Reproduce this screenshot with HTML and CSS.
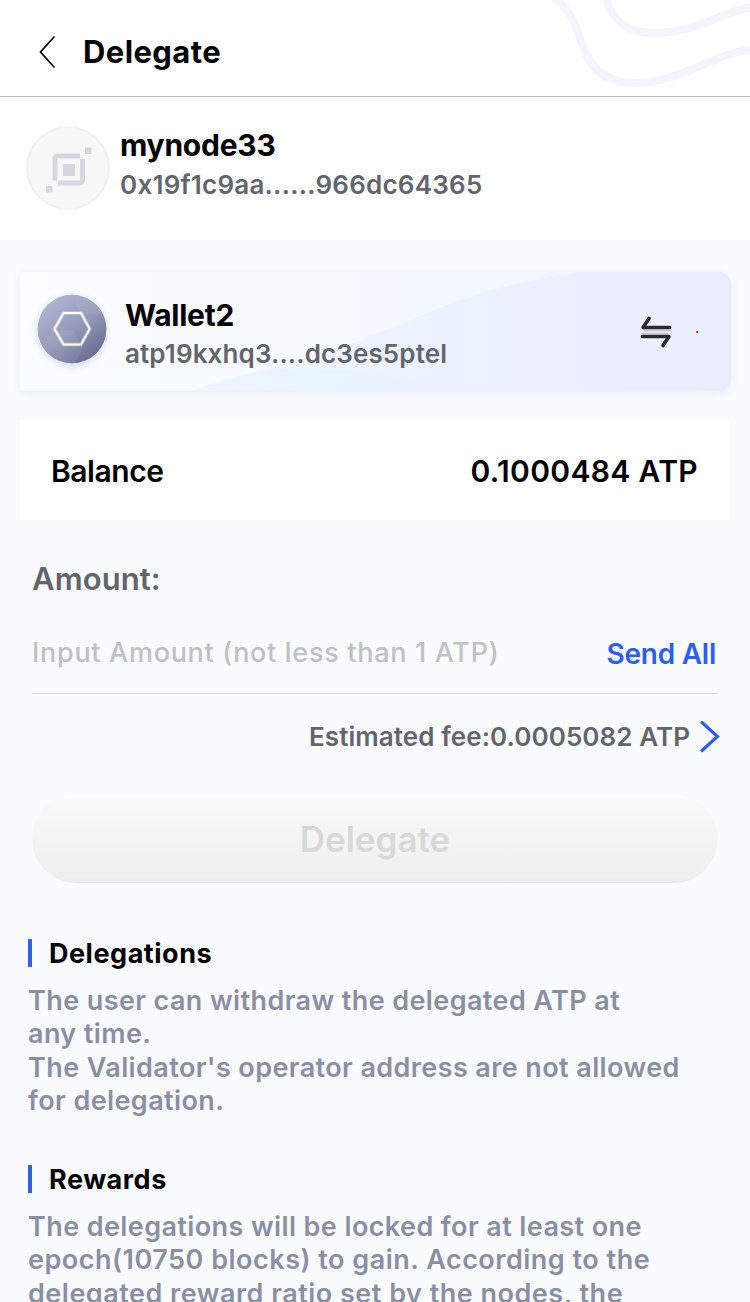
FILE: index.html
```html
<!DOCTYPE html>
<html lang="en">
<head>
<meta charset="utf-8">
<title>Delegate</title>
<link rel="stylesheet" href="styles.css">
</head>
<body>
<div class="screen">
  <header class="header">
    <svg class="header-waves" width="250" height="96" viewBox="0 0 250 96" fill="none" stroke="#f3f4fc" stroke-width="8">
      <path d="M54 -2C70 10 76 24 81 41C88 66 104 83 134 83C181 83 218 51 252 50"/>
      <path d="M106 -2C112 22 128 33 155 33C195 33 222 12 252 7"/>
      <path d="M158 -4Q172 -3 184 -4"/>
    </svg>
    <svg class="back" width="18" height="34" viewBox="0 0 18 34" fill="none" stroke="#000" stroke-width="1.7"><path d="M16.500 1.500L2.500 17L16.500 32.500"/></svg>
    <h1 class="title">Delegate</h1>
  </header>
  <section class="node">
    <svg class="node-logo" width="84" height="84" viewBox="0 0 84 84">
      <circle cx="42" cy="42" r="41" fill="#f7f7f8" stroke="#eeeeef" stroke-width="1.600"/>
      <g fill="#d7d8df"><rect x="59" y="21.500" width="6.500" height="6.500"/><rect x="20" y="60" width="6.500" height="6.500"/><rect x="37" y="38" width="12" height="12"/></g>
      <g fill="none" stroke="#d7d8df" stroke-width="5"><path d="M29 54.500V33Q29 30 32 30H54"/><path d="M56.500 33V53.500Q56.500 57 53 57H32"/></g>
    </svg>
    <div class="names"><div class="name node-name">mynode33</div><div class="address node-address">0x19f1c9aa......966dc64365</div></div>
  </section>
  <section class="wallet">
    <svg class="wallet-bg" width="711" height="120" viewBox="0 0 711 120" preserveAspectRatio="none">
      <defs>
        <linearGradient id="base"><stop stop-color="#fcfdff"/><stop offset=".5" stop-color="#f5f9ff"/><stop offset=".8" stop-color="#f0f6ff"/></linearGradient>
        <linearGradient id="wave" gradientUnits="userSpaceOnUse" x1="170" y1="0" x2="711" y2="0"><stop stop-color="#f1f7ff"/><stop offset=".48" stop-color="#ebf2fe"/><stop offset=".6" stop-color="#edf1fe"/><stop offset="1" stop-color="#eaedfd"/></linearGradient>
        <linearGradient id="low"><stop stop-color="#eef6ff"/><stop offset=".6" stop-color="#e8f3fe"/><stop offset="1" stop-color="#ecf1fe"/></linearGradient>
        <linearGradient id="tint" x1="0" x2="0" y1="0" y2="1"><stop stop-color="#f7fdff" stop-opacity="0"/><stop offset="1" stop-color="#f7fdff"/></linearGradient>
      </defs>
      <rect width="711" height="120" fill="url(#base)"/>
      <path d="M0 78H300L170 120H0Z" fill="url(#tint)"/>
      <path d="M170 120C210 106 255 96 300 82C390 57 430 18 560 0H711V120Z" fill="url(#wave)"/>
      <path d="M170 120C210 107 240 98 290 97C350 98 405 112 470 120Z" fill="url(#low)"/>
    </svg>
    <svg class="wallet-logo" width="70" height="70" viewBox="0 0 70 70">
      <defs><linearGradient id="orb" x1=".25" y1=".1" x2=".85" y2=".9"><stop stop-color="#adb3cf"/><stop offset=".5" stop-color="#9298b7"/><stop offset="1" stop-color="#686d91"/></linearGradient><clipPath id="orb-clip"><circle cx="35" cy="35" r="34.500"/></clipPath></defs>
      <circle cx="35" cy="35" r="34.500" fill="url(#orb)"/>
      <g clip-path="url(#orb-clip)" fill="#fff" fill-opacity=".06"><path d="M40 0L38 10L45 21L70 20V0Z"/><path d="M0 58L15 36H36L46 53L38 70H0Z"/></g>
      <path d="M26.500 19H44L52.700 35L44 50.500H26.500L17.500 35Z" fill="none" stroke="#fff" stroke-opacity=".25" stroke-width="4"/>
      <path d="M26.500 19H44L52.700 35L44 50.500H26.500L17.500 35Z" fill="none" stroke="#fff" stroke-width="1.900"/>
    </svg>
    <div class="names"><div class="name wallet-name">Wallet2</div><div class="address wallet-address">atp19kxhq3....dc3es5ptel</div></div>
    <svg class="swap" width="32" height="32" viewBox="0 0 32 32" fill="none" stroke="#292a2c" stroke-linejoin="round"><path d="M4 14.500H31M1 17.500H28" stroke="#c4c6d0" stroke-width="1.500"/><g stroke-width="3.600" stroke-linecap="round"><path d="M29.500 11.500H3L9 2.500"/><path d="M2.500 20.500H29L23 29.500"/></g></svg>
    <span class="dot"></span>
  </section>
  <section class="balance"><span class="balance-label">Balance</span><span class="balance-value">0.1000484 ATP</span></section>
  <section class="form">
    <div class="amount-label"><span>Amount:</span></div>
    <div class="amount-row"><span class="placeholder">Input Amount (not less than 1 ATP)</span><span class="send-all">Send All</span></div>
    <div class="fee-row"><span class="fee">Estimated fee:0.0005082 ATP</span><svg width="20" height="32" viewBox="0 0 20 32" fill="none" stroke="#2c5df6" stroke-width="3.200"><path d="M2 1.500L17.500 15.500L2 29.500" stroke-linecap="round"/></svg></div>
    <div class="submit"><span>Delegate</span></div>
  </section>
  <section class="info">
    <h2 class="info-title">Delegations</h2>
    <p class="info-text">The user can withdraw the delegated ATP at<br>any time.<br>The Validator's operator address are not allowed<br>for delegation.</p>
    <h2 class="info-title">Rewards</h2>
    <p class="info-text">The delegations will be locked for at least one<br><span class="wide">epoch(10750 blocks) to gain. According to the</span><br><span class="wide">delegated reward ratio set by the nodes, the</span></p>
  </section>
</div>
</body>
</html>
```
FILE: styles.css
```css
* { box-sizing: border-box; }
body { margin: 0; font-family: Inter, "Liberation Sans", sans-serif; }
h1, h2, p { margin: 0; }
svg { display: block; flex: none; }
.screen { width: 750px; height: 1302px; overflow: hidden; background: #fafbff; white-space: nowrap; color: #000; }
.header { position: relative; height: 97px; background: #fff; border-bottom: 1px solid #bfbfc2; display: flex; align-items: center; padding: 7px 0 0 38px; }
.header-waves { position: absolute; right: 0; top: 0; }
.title { margin-left: 27px; font-size: 31px; line-height: 40px; font-weight: 700; letter-spacing: .4px; }
.node { height: 143px; background: #fff; display: flex; padding: 29px 26px; }
.names { display: flex; flex-direction: column; }
.name { font-size: 30px; line-height: 40px; font-weight: 700; letter-spacing: -.25px; }
.node-name { line-height: 38px; padding-bottom: 2px; }
.address { font-size: 26px; line-height: 38px; font-weight: 600; color: #62646e; letter-spacing: .12px; }
.node-address { letter-spacing: .23px; }
.node .names { margin-left: 10px; }
.wallet { position: relative; margin: 32px 19px 0 20px; height: 119px; border-radius: 4px 12px 12px 4px; box-shadow: 0 3px 8px rgba(80, 90, 140, .09); display: flex; padding: 22px 17px; }
.wallet-bg { position: absolute; inset: 0; width: 100%; height: 100%; border-radius: inherit; }
.wallet > :not(.wallet-bg) { position: relative; }
.wallet-logo { border-radius: 50%; box-shadow: 0 2px 6px rgba(110, 130, 200, .3); }
.wallet .names { margin: 1px 0 0 18px; }
.swap { margin: 22px 24px 0 auto; }
.dot { width: 2px; height: 2px; margin: 37px 16px 0 0; background: #e8412c; }
.balance { margin: 29px 20px 0; height: 100px; padding: 2px 32px 0 31px; background: #fff; display: flex; align-items: center; justify-content: space-between; font-size: 30px; font-weight: 600; }
.balance-label { letter-spacing: -.45px; }
.balance-value { letter-spacing: .35px; }
.form { padding: 39px 32px 0; }
.amount-label { font-size: 31px; line-height: 40px; font-weight: 600; color: #62646e; letter-spacing: .1px; }
.amount-row { margin-top: 14px; height: 81px; border-bottom: 1px solid #dcdce0; display: flex; align-items: center; justify-content: space-between; }
.placeholder { font-size: 27px; font-weight: 500; color: #c0c1c5; letter-spacing: .7px; padding-bottom: 1px; }
.send-all { font-size: 28px; font-weight: 600; color: #2c5df6; padding: 2px 2px 0 0; letter-spacing: -.25px; }
.fee-row { height: 101px; padding-bottom: 16px; display: flex; align-items: center; justify-content: flex-end; gap: 10px; margin-right: -2px; }
.fee { font-size: 26px; font-weight: 600; color: #62646e; letter-spacing: .08px; }
.submit { height: 88px; border-radius: 44px; background: linear-gradient(#fff 0, #f9f9f9 7%, #efefef 94%, #e9e9e9); display: flex; align-items: center; justify-content: center; font-size: 35px; font-weight: 600; color: #d8d8d9; }
.info { padding: 56px 28px 0; }
.info-title { border-left: 4px solid #315ff0; height: 28px; line-height: 29px; padding-left: 17px; font-size: 27px; font-weight: 700; letter-spacing: .52px; }
.info-text { margin: 17px 0 48px; font-size: 27px; line-height: 33.3px; font-weight: 600; color: #8b8fa3; letter-spacing: .4px; }
.wide { letter-spacing: .5px; }
```
